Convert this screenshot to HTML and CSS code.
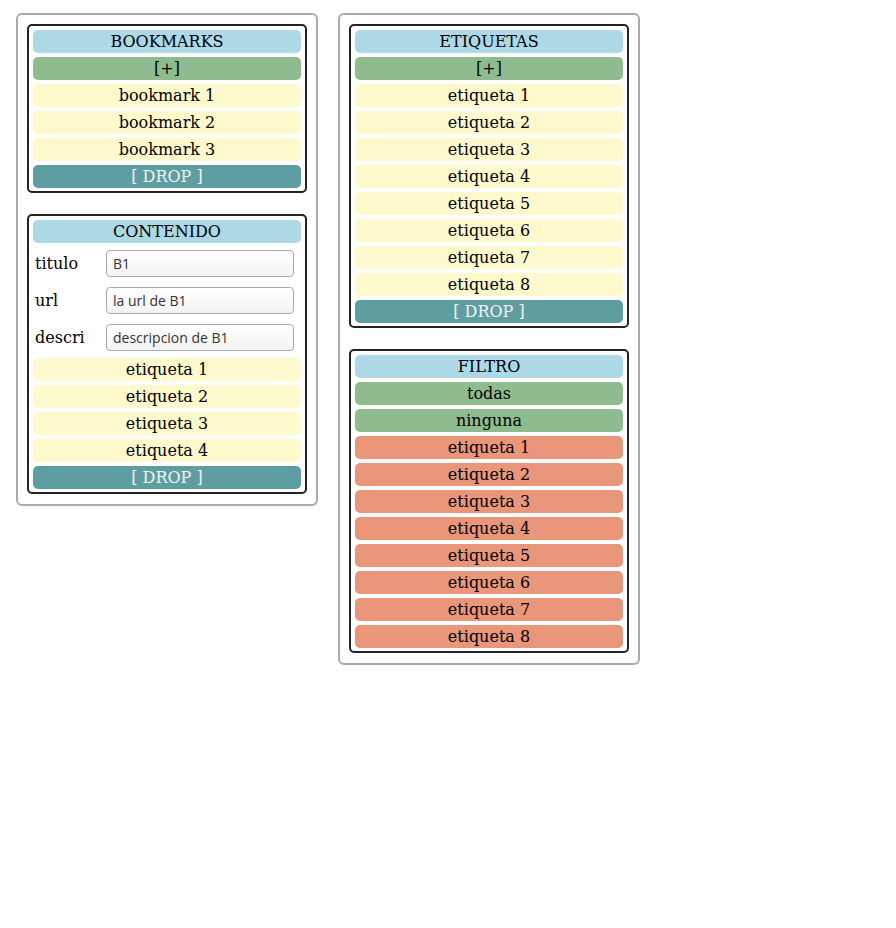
FILE: index.html
```html
<!DOCTYPE html>
<html lang="es">
<head>
  <meta charset="UTF-8">
  <title>Bookmarks</title>
  <link rel="stylesheet" href="styles.css">
</head>
<body>
  <div class="columns">
    <div class="column">
      <div class="panel">
        <div class="item head">BOOKMARKS</div>
        <div class="item add">[+]</div>
        <div class="item entry">bookmark 1</div>
        <div class="item entry">bookmark 2</div>
        <div class="item entry">bookmark 3</div>
        <div class="item drop">[ DROP ]</div>
      </div>

      <div class="panel">
        <div class="item head">CONTENIDO</div>
        <div class="field">
          <label for="titulo">titulo</label>
          <input type="text" id="titulo" value="B1">
        </div>
        <div class="field">
          <label for="url">url</label>
          <input type="text" id="url" value="la url de B1">
        </div>
        <div class="field">
          <label for="descri">descri</label>
          <input type="text" id="descri" value="descripcion de B1">
        </div>
        <div class="item entry">etiqueta 1</div>
        <div class="item entry">etiqueta 2</div>
        <div class="item entry">etiqueta 3</div>
        <div class="item entry">etiqueta 4</div>
        <div class="item drop">[ DROP ]</div>
      </div>
    </div>

    <div class="column">
      <div class="panel">
        <div class="item head">ETIQUETAS</div>
        <div class="item add">[+]</div>
        <div class="item entry">etiqueta 1</div>
        <div class="item entry">etiqueta 2</div>
        <div class="item entry">etiqueta 3</div>
        <div class="item entry">etiqueta 4</div>
        <div class="item entry">etiqueta 5</div>
        <div class="item entry">etiqueta 6</div>
        <div class="item entry">etiqueta 7</div>
        <div class="item entry">etiqueta 8</div>
        <div class="item drop">[ DROP ]</div>
      </div>

      <div class="panel">
        <div class="item head">FILTRO</div>
        <div class="item add">todas</div>
        <div class="item add">ninguna</div>
        <div class="item off">etiqueta 1</div>
        <div class="item off">etiqueta 2</div>
        <div class="item off">etiqueta 3</div>
        <div class="item off">etiqueta 4</div>
        <div class="item off">etiqueta 5</div>
        <div class="item off">etiqueta 6</div>
        <div class="item off">etiqueta 7</div>
        <div class="item off">etiqueta 8</div>
      </div>
    </div>
  </div>
</body>
</html>
```

FILE: styles.css
```css
body {
  margin: 0;
  padding: 13px 0 0 16px;
  font-family: "DejaVu Serif", serif;
  font-size: 16px;
  color: #000;
}
.columns {
  display: flex;
  align-items: flex-start;
  gap: 20px;
}
.column {
  width: 302px;
  box-sizing: border-box;
  border: 2px solid #aaa;
  border-radius: 6px;
  padding: 9px 9px 10px;
  display: flex;
  flex-direction: column;
  gap: 21px;
}
.panel {
  border: 2px solid #222;
  border-radius: 5px;
  padding: 4px 4px 3px;
  display: flex;
  flex-direction: column;
  gap: 4px;
}
.item {
  text-align: center;
  line-height: 19px;
  padding: 2px 0;
  border-radius: 5px;
}
.head {
  background-color: lightblue;
}
.add {
  background-color: darkseagreen;
}
.entry {
  background-color: lemonchiffon;
}
.drop {
  background-color: cadetblue;
  color: #f2f2f2;
}
.off {
  background-color: darksalmon;
}
.field {
  display: flex;
  align-items: center;
  height: 33px;
}
.field label {
  width: 71px;
  padding-left: 2px;
}
.field input {
  width: 188px;
  height: 27px;
  box-sizing: border-box;
  border: 1px solid #aaa;
  border-radius: 4px;
  padding: 0 6px;
  font-family: "Open Sans", sans-serif;
  font-size: 14px;
  color: #333;
  background: linear-gradient(#fff, #f3f3f3);
}
```
